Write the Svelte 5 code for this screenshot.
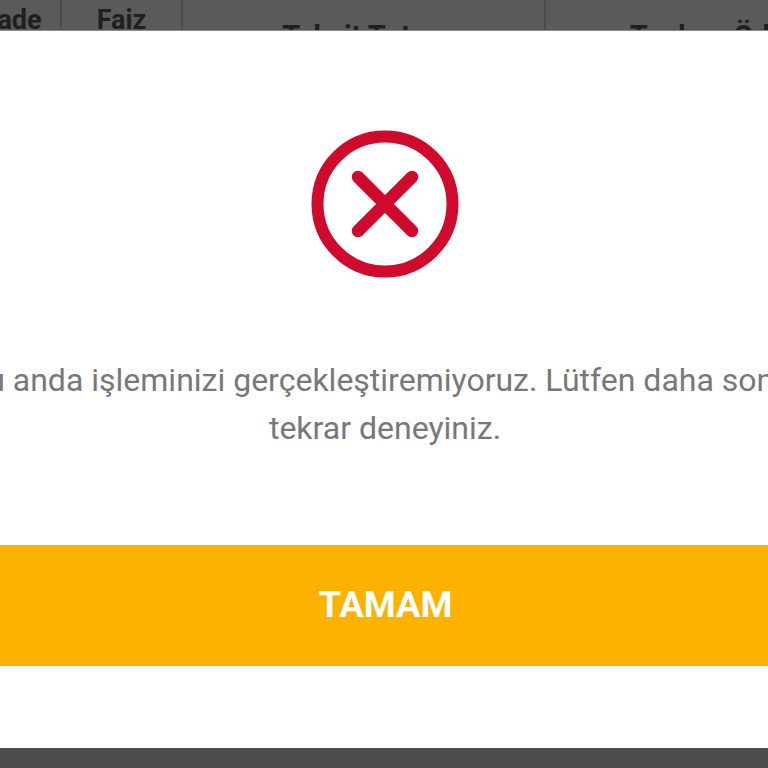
<script>
	const columns = [
		{ label: 'Vade', cls: 'vade' },
		{ label: 'Faiz', cls: 'faiz' },
		{ label: 'Taksit Tutarı', cls: 'taksit' },
		{ label: 'Toplam Ödeme', cls: 'toplam' }
	];
</script>

<div class="page">
	<div class="table-head">
		{#each columns as col}
			<div class="cell {col.cls}">{col.label}</div>
		{/each}
	</div>

	<div class="modal">
		<div class="icon-wrap">
			<svg width="150" height="150" viewBox="0 0 150 150" aria-hidden="true">
				<circle cx="75" cy="75" r="67.5" fill="none" stroke="#cf0a2c" stroke-width="12" />
				<path d="M48 48 L102 102 M102 48 L48 102" fill="none" stroke="#cf0a2c" stroke-width="12.5" stroke-linecap="round" />
			</svg>
		</div>
		<p class="message">Şu anda işleminizi gerçekleştiremiyoruz. Lütfen daha sonra<br />tekrar deneyiniz.</p>
		<button class="ok" type="button">TAMAM</button>
	</div>
</div>

<style>
	:global(body) {
		margin: 0;
		background: #4d4d4d;
	}

	.page {
		width: 768px;
		height: 768px;
		overflow: hidden;
		background: #4d4d4d;
		font-family: Roboto, "Noto Sans", sans-serif;
	}

	.table-head {
		display: flex;
		height: 31px;
		margin-left: -38px;
		width: 948px;
		overflow: hidden;
		background: #5a5a5a;
		border-bottom: 1px solid #8a8a8a;
		box-sizing: border-box;
	}

	.cell {
		box-sizing: border-box;
		border-right: 2px solid #4a4a4a;
		padding-top: 5px;
		text-align: center;
		font-size: 27px;
		line-height: 30px;
		font-weight: 700;
		color: #1f1f1f;
		white-space: nowrap;
	}

	.vade { width: 100px; }
	.faiz { width: 121px; }
	.taksit { width: 363px; padding-top: 21px; font-size: 29px; }
	.toplam { width: 364px; padding-top: 21px; font-size: 29px; border-right: none; }

	.modal {
		height: 717px;
		background: #fff;
		display: flex;
		flex-direction: column;
		align-items: center;
	}

	.icon-wrap {
		height: 150px;
		margin-top: 98px;
		margin-left: 2px;
	}

	.message {
		margin: 77px 0 0 2px;
		font-size: 32px;
		line-height: 48px;
		color: #77787a;
		text-align: center;
		white-space: nowrap;
	}

	.ok {
		width: 100%;
		height: 121px;
		margin-top: 93px;
		border: none;
		background: #fdb100;
		color: #fff;
		font-family: inherit;
		font-size: 36.5px;
		font-weight: 700;
		padding: 0 0 3px 3px;
		flex-shrink: 0;
	}
</style>
